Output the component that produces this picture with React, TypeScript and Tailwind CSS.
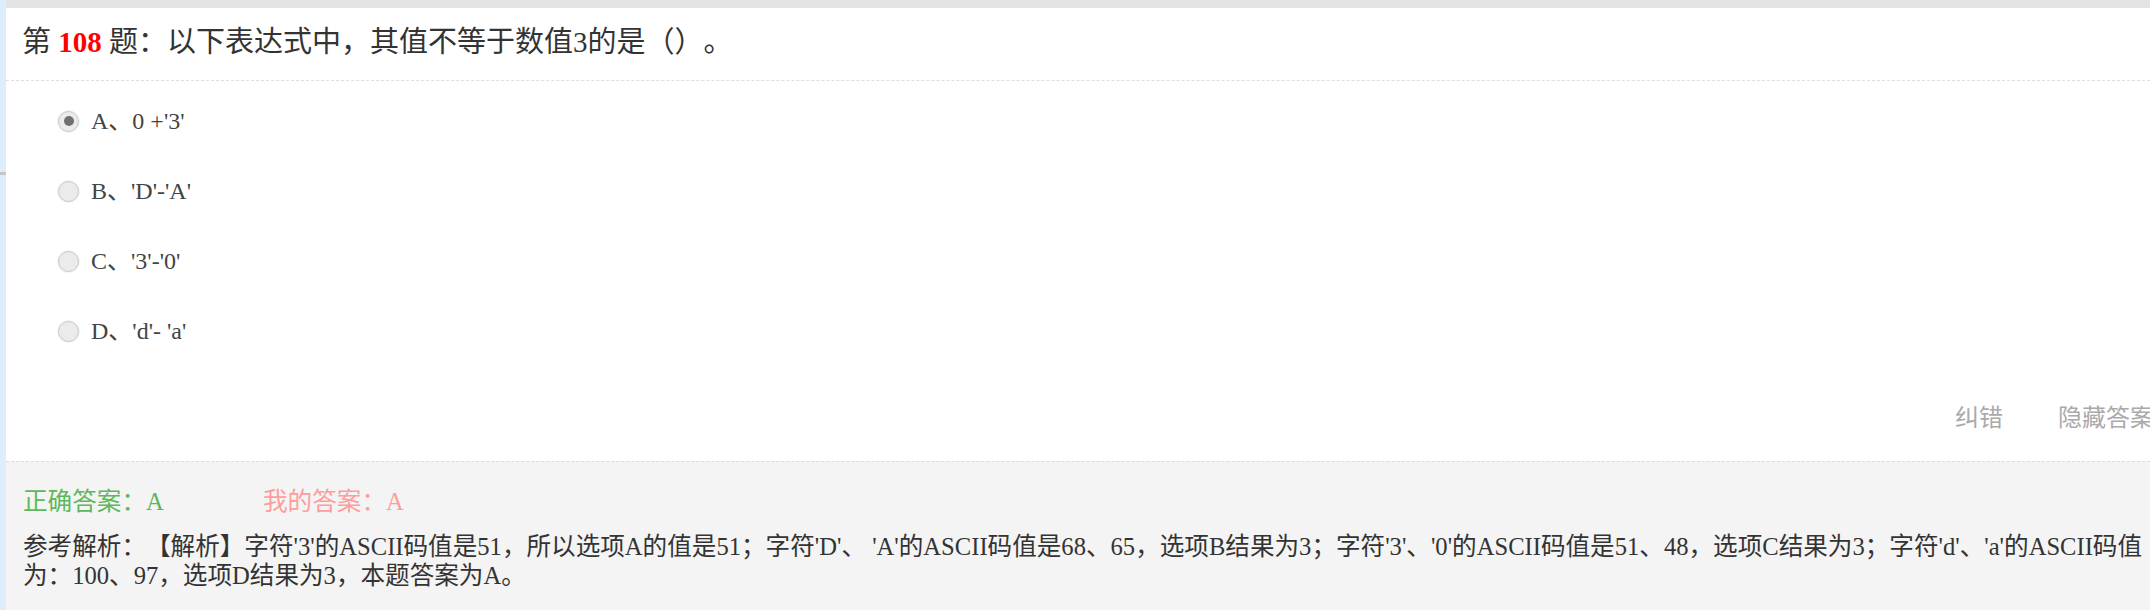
import React from "react";

const FONT = { fontFamily: '"Liberation Serif", "Noto Sans CJK SC", serif' };

function Radio({ checked }: { checked?: boolean }) {
  return (
    <span className="flex items-center justify-center w-[21px] h-[21px] rounded-full border border-[#c8c8c8] bg-[#ebebeb] shadow-[0_0_1px_1px_rgba(0,0,0,0.04)] shrink-0">
      {checked && <span className="w-[10px] h-[10px] rounded-full bg-[#707070]" />}
    </span>
  );
}

const options = [
  { label: "A", text: "0 +'3'", checked: true },
  { label: "B", text: "'D'-'A'" },
  { label: "C", text: "'3'-'0'" },
  { label: "D", text: "'d'- 'a'" },
];

export default function App() {
  return (
    <div className="flex w-[2150px] h-[610px] overflow-hidden bg-white [text-spacing-trim:space-all]" style={FONT}>
      <div className="w-[6px] shrink-0 bg-[#ddedfc] flex flex-col">
        <div className="h-[172px]" />
        <div className="h-[3px] bg-[#c6c6c6]" />
      </div>
      <div className="w-[2164px] shrink-0 flex flex-col">
        <div className="h-[8px] bg-[#e3e4e6]" />
        <div className="flex flex-col bg-white h-[453px]">
          <div className="h-[73px] flex items-center pl-[16px] pb-[2px] border-b border-dashed border-[#dedede] text-[29px] text-[#333]">
            <span>第&nbsp;</span>
            <span className="font-bold text-[#ff0000]">108</span>
            <span>&nbsp;题：以下表达式中，其值不等于数值3的是（）。</span>
          </div>
          <div className="flex flex-col pt-[5px] pl-[52px]">
            {options.map((o) => (
              <div key={o.label} className="h-[70px] flex items-center gap-[12px] text-[24px] text-[#444]">
                <Radio checked={o.checked} />
                <span>
                  {o.label}、{o.text}
                </span>
              </div>
            ))}
          </div>
          <div className="flex-1 flex items-center justify-end pr-[16px] pt-[8px] text-[24px] text-[#aaaaaa]">
            <span className="mr-[55px]">纠错</span>
            <span>隐藏答案</span>
          </div>
        </div>
        <div className="flex-1 bg-[#f4f4f4] border-t border-dashed border-[#dcdcdc] pt-[25px] pl-[17px] pr-[10px] text-[24.6px]">
          <div className="flex leading-[29px]">
            <span className="w-[240px] text-[#5cb85c]">正确答案：A</span>
            <span className="text-[#ff9c9c]">我的答案：A</span>
          </div>
          <p className="mt-[16px] leading-[29px] text-[#333]">
            参考解析：【解析】字符'3'的ASCII码值是51，所以选项A的值是51；字符'D'、 'A'的ASCII码值是68、65，选项B结果为3；字符'3'、'0'的ASCII码值是51、48，选项C结果为3；字符'd'、'a'的ASCII码值为：100、97，选项D结果为3，本题答案为A。
          </p>
        </div>
      </div>
    </div>
  );
}
